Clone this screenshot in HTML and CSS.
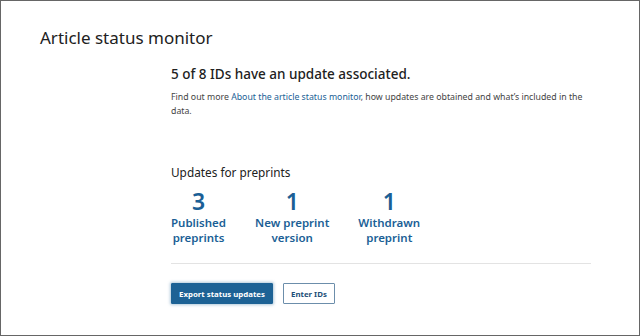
FILE: index.html
```html
<!DOCTYPE html>
<html lang="en">
<head>
<meta charset="utf-8">
<title>Article status monitor</title>
<link rel="stylesheet" href="styles.css">
</head>
<body>
<div class="frame">
  <h1 class="title">Article status monitor</h1>
  <main class="content">
    <h2 class="summary">5 of 8 IDs have an update associated.</h2>
    <p class="intro">Find out more <a href="#" class="link">About the article status monitor</a>, how updates are obtained and what’s included in the data.</p>
    <section class="updates">
      <h3 class="updates-title">Updates for preprints</h3>
      <div class="stats">
        <a href="#" class="stat"><span class="stat-num">3</span><span class="stat-label">Published<br>preprints</span></a>
        <a href="#" class="stat"><span class="stat-num">1</span><span class="stat-label">New preprint<br>version</span></a>
        <a href="#" class="stat"><span class="stat-num">1</span><span class="stat-label">Withdrawn<br>preprint</span></a>
      </div>
    </section>
    <div class="actions">
      <button class="btn btn-primary">Export status updates</button>
      <button class="btn btn-secondary">Enter IDs</button>
    </div>
  </main>
</div>
</body>
</html>
```
FILE: styles.css
```css
* { box-sizing: border-box; }
html, body { margin: 0; padding: 0; }
body {
  font-family: "Noto Sans", "Open Sans", sans-serif;
  color: #212121;
  background: #fff;
}
.frame {
  width: 640px;
  height: 336px;
  border: 1px solid #666;
  padding: 25px 48px 0 39px;
  overflow: hidden;
}
.title {
  margin: 0;
  font-size: 17px;
  font-weight: 400;
  line-height: 24px;
  color: #212121;
}
.content {
  margin-left: 131px;
  padding-top: 15px;
}
.summary {
  margin: 0;
  font-size: 13.5px;
  font-weight: 500;
  line-height: 18px;
}
.intro {
  margin: 8px 0 0;
  font-size: 8.75px;
  line-height: 13.5px;
  color: #444;
}
.link { color: #1b5f96; text-decoration: none; }
.updates { margin-top: 46px; }
.updates-title {
  margin: 0;
  font-size: 11.8px;
  font-weight: 400;
  line-height: 16px;
}
.stats {
  display: flex;
  gap: 29px;
  margin-top: 9px;
  padding-bottom: 18px;
  border-bottom: 1px solid #e3e3e3;
}
.stat {
  display: flex;
  flex-direction: column;
  align-items: center;
  text-align: center;
  color: #1b5f96;
  text-decoration: none;
  font-weight: 600;
}
.stat-num { font-size: 23px; line-height: 24px; margin-bottom: 3px; }
.stat-label { font-size: 11.5px; line-height: 14.5px; }
.actions {
  display: flex;
  gap: 10px;
  margin-top: 19px;
}
.btn {
  font-family: inherit;
  font-size: 7.85px;
  font-weight: 700;
  height: 21px;
  padding: 0 7px;
  border-radius: 1px;
  cursor: pointer;
}
.btn-primary {
  background: #1d6295;
  color: #fff;
  border: 1px solid #1d6295;
  box-shadow: 0 0 3px 1px rgba(29, 98, 149, 0.35);
}
.btn-secondary {
  background: #fff;
  color: #1d4f78;
  border: 1px solid #6c8eab;
}
```
